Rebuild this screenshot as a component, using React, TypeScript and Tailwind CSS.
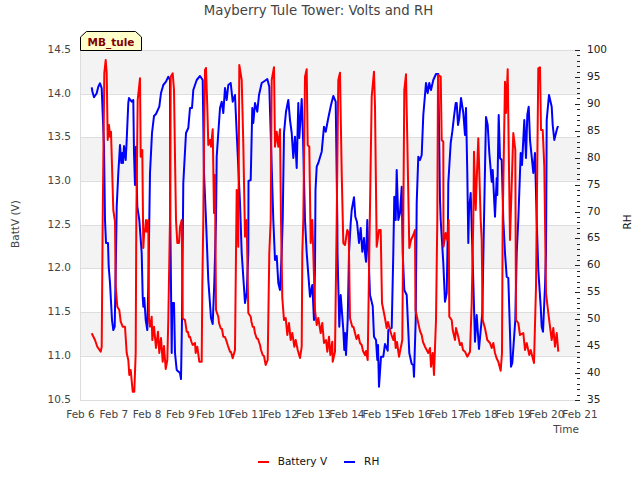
const blue = "91.7,87.3 92.5,92 94,97.3 96.7,93.3 98.3,86.7 100,83.3 101.7,88.3 104,146.7 105,220 106,243 108,243 108.7,266.7 110,283 112,320 113.3,330 114.7,326.7 116,253 116.7,206.7 118.3,173 120,145 121.3,163 122.3,153 123,163 124,146 125.7,160 126.7,140 128.3,103 129,98 131.7,101.7 133.3,100 134,153 135,185 136,146.7 137.3,206.7 139.3,220 141.7,253 142.7,296.7 143.3,306.7 144.3,298 145.7,320 147.3,330 148.3,286.7 149.3,220 150,173 152,133 154,116 156,114 159.3,106.7 161,93 163.3,85 166,81.7 168.3,76.7 170,80 170.3,220 171.7,353 172.3,303 174,303 175,353 176.7,370 180,373 181,379 182,320 183.3,183 186,133 188.3,128 190,108 192,108 193.3,90 196.7,80 200,76 202.7,80 204,173 206,220 208.3,280 211,318 212.7,324 214.3,283 216,220 216.7,156.7 220,108 221.7,101.7 223.3,113 225,88 226.7,100 228.3,85 230.7,83 232.7,101.7 235,95 236.7,133 240,203 241.7,253 245,303 246.7,293 248.3,253 248.5,181 250.7,180 252.3,108 253.3,123 255,103 257.3,111.7 259,95 261.7,83 265,80.7 267.3,79 269.3,86.7 272.7,200 273.3,220 275,260 276.7,256 278.3,283 280,290 281.7,253 282.7,220 284,133 286,111.7 288.3,100 290,120 291.7,133 293.3,158 295,136.7 296.7,168 298.3,103 299.3,138 301.7,99 303,136.7 305,220 306.7,253 310,296.7 312.3,285 314,320 315,266 315.5,190 316.7,166.7 318.3,163 321.7,151.7 324,126.7 325.7,131.7 328.3,118 331,105 333.3,96 335.7,101.7 337.3,220 337.5,253 339.3,326.7 340.7,295 343.3,330 344.3,350 345,333 346,355 347.7,320 349,253 350.7,223 351.7,210 354,197.3 355.3,216.7 357,222 359,243 360.7,228 362.3,251.7 364,238 365,253 366,261.7 367.3,220 370,295 372.7,306 374,336.7 376,340 377.3,360 378,345 379,386.7 381,356.7 383.3,356.7 385,344 387.7,350.7 388.3,330 391.7,328 393.3,253 394.3,196.7 395.7,220 396.7,170 398.3,220 400,213 401.7,186.7 402.7,253 404.3,290 406.7,295 409.3,353 411.7,364 413.3,365 414,376.7 415.7,320 416.7,203 418.3,156.7 420,160 421.7,155 423.3,115 426,83 427.7,93 429.3,83 431,90 433.3,80 436,74 438.3,74 440,200 440.7,220 443.3,263 445,301.7 446.7,293 448,220 448.3,183 450.7,143 452.3,131.7 454,116.7 455.7,103 456.7,103 458,125 459.3,118 461,98 463.3,113 465,135 466,108 467.3,173 468.3,243 469,210 470.7,193 472.3,246.7 475,341.7 476.7,315 479,349 482.3,313 484,220 486,117 487.7,125 489.3,153 491.7,181.7 492.7,170 495,216.7 496.7,178 497.3,195 498.7,115 500,158 501.7,160 503.3,220 505,253 506.7,276.7 508.3,278 510,333 511,366.7 512.3,363 515.3,320 516.7,253 518.3,220 520.7,153 522,165 524.3,120 526,158 527.3,115 528.7,106.7 530,140 531.7,156.7 533.3,173 535,153 536.7,220 538.3,270 540.7,306.7 541.7,326.7 543,331.7 545,286.7 546,253 546.7,120 549,95 551.7,106.7 552.7,125 554.3,140 556.7,130 558,126";

const red = "91.7,333.3 95,340 97.3,346.7 100.7,351.7 101.7,346.7 102.7,220 104.3,73 105.7,60 106.7,73 107.7,140 109,125 110,136.7 111,131.7 113.3,210 115,221.7 115.7,286.7 117.3,306.7 119.3,310 120.7,321.7 122.7,326.7 125,326.7 126.7,353 128.3,360 129.3,375 130.7,370 132.7,391.7 134.3,391.7 135.7,353 136.3,220 137.7,100 140,78.3 140.7,156.7 142.3,150 143.3,248 144.3,230 145,231.7 146,220 146.7,231.7 148.3,220 149,320 150,326.7 151.7,316.7 152.3,340 154,326.7 156,348 158,331.7 159.3,353 161,338 162.7,361.7 164,346 165.7,369 167.3,360 168.3,320 170,220 170.7,76.7 172.7,73.3 174,90 175,156.7 176,220 177.3,243 179,243 180,226.7 181.7,220 182.7,318.3 185,320 186.7,331.7 188,332 189,337 190,336.7 191.5,342 192.7,345 195,343 195.7,353 197.3,346.7 199.3,361.7 201.7,361.7 202.3,286.7 203.3,220 204,140 205,70 206,68 207.3,106.7 208.3,145 210,140 211,146.7 212.7,129.3 214,213 215,175 215.3,220 216,310 218.3,316.7 219,323 220.7,328.3 222,329 223.3,336.7 225,337 226.7,341.7 228,346 230,351.7 231,352 232.7,358.3 235,350 236,253 236.7,190 237.7,220 238.3,246.7 239.3,65 241.7,80 243.3,143.3 245,236.7 246.7,220 248.3,313 250.7,316.7 251.5,322 252.7,326.7 254,327 255,333.3 256.7,338.3 258,339 260,345 261,350 262.7,355 264,356 265.7,365 267.7,360 269.3,253 270.7,220 271.7,80 274,67.3 275,146.7 276.7,131.7 278.3,146.7 280,129.3 281,220 282.3,298 284,320 285.7,318 287.3,335 289,323 290.7,340 292.3,333 294.3,346.7 295.7,340 297.7,350 300,358 301.7,346.7 302.3,253 303.3,220 305,76.7 306.7,69.3 307.7,145 309.3,146.7 310.7,243 312.3,220 315,310 316.7,325 318.3,318 320.7,333 322.3,323 324,343 326,340 327.3,351.7 329,336.7 330.3,355 332.3,341.7 332.7,361.7 335,351.7 336.7,220 338.3,80 340,72.7 341.7,173 343.3,243 345,245 347.3,230 348.7,233 350,318.3 352.3,326.7 353.5,327 355,333 356.5,339 358.3,335 360,343 361.7,345 363,351 365,355 366,351 367.7,360 369.3,253 371.7,96.7 374,71.7 375,106.7 376.7,246.7 379,230 380.7,230 382,303 385,318.3 386.7,328 388,322 390,330 391.5,335 393.3,340 394.5,333 395.7,348 397,342 399,356.7 402.3,340 403.3,220 404.3,90 406,74.3 407.3,140 409.3,248 411,240 413.3,235 415,230 415.5,310 418.3,323.3 420,331 421.7,335 423,342 425,346.7 428.3,353 430,348 431,366.7 432.7,353 434,375 436,320 437.3,220 438,75 440.7,76.7 441.7,140 443.3,141.7 443.5,246.7 445.7,233 447.3,240 448.7,220 449.3,316.7 451.7,320 452.7,330 455,340 456,328 458.3,336.7 460,345 461.7,343 463,350 465,351.7 467.3,356.7 470,351.7 471.7,303 473.3,220 474,151.7 475.7,210 476.7,180 478.3,138.3 480.7,220 481.7,240 482.7,320 485,328.3 487.3,340 490,343 491.7,348 493.3,343 495,353 496.5,358 498.3,361.7 500.7,370.7 502,353 502.7,220 505,81.7 506,113 507.7,69.3 508.7,146.7 510,240 513.3,133 515.3,150 516,320 518.3,323 520,335 523.3,333 525,350 526.7,343 529.3,355 530.7,350 534,363 536,286.7 536.7,220 538.3,68.3 540,67.3 541,130 542.7,130 544.3,166.7 546,293 548.3,313 550,326.7 551.7,340 553.3,328 555,346.7 556.7,333 558.3,351.7";

const bandYs = [50, 137, 225, 312];
const gridYs = [50, 94, 137, 181, 225, 268, 312, 356, 400];
const leftLabels = ["14.5", "14.0", "13.5", "13.0", "12.5", "12.0", "11.5", "11.0", "10.5"];
const rhValues = Array.from({ length: 66 }, (_, i) => 35 + i);

export default function App() {
  return (
    <div className="w-[640px] h-[480px] bg-white flex flex-col overflow-hidden font-['DejaVu_Sans',sans-serif]">
      <div className="h-[22px] pr-[3px] flex items-center justify-center text-[13.3px] text-[#444444]">
        Mayberry Tule Tower: Volts and RH
      </div>
      <svg width="640" height="424" viewBox="0 22 640 424" className="block text-[10.5px]">
        {bandYs.map((y) => (
          <rect key={y} x="80.5" y={y} width="499.5" height="43.7" fill="#f3f3f3" />
        ))}
        {gridYs.map((y) => (
          <line key={y} x1="80" x2="580" y1={y + 0.5} y2={y + 0.5} stroke="#dddddd" />
        ))}
        <line x1="80.5" x2="80.5" y1="50" y2="400" stroke="#dddddd" />

        {rhValues.map((v) => {
          const y = Math.round(400 - (v - 35) * (350 / 65)) + 0.5;
          return (
            <line key={v} x1={v % 5 === 0 ? 575 : 577} x2="580" y1={y} y2={y} stroke="#222222" />
          );
        })}

        <polyline points={blue} fill="none" stroke="#0000ff" strokeWidth="2" strokeLinejoin="round" />
        <polyline points={red} fill="none" stroke="#ff0000" strokeWidth="2" strokeLinejoin="round" />

        {leftLabels.map((t, i) => (
          <text key={t} x="71" y={gridYs[i] + 3} textAnchor="end" fill="#444444">{t}</text>
        ))}
        {rhValues.filter((v) => v % 5 === 0).map((v) => (
          <text key={v} x="587" y={400 - (v - 35) * (350 / 65) + 3} fill="#222222">{v}</text>
        ))}
        {Array.from({ length: 16 }, (_, i) => (
          <text key={i} x={80.5 + i * 33.3} y="418" textAnchor="middle" fill="#444444">{`Feb ${6 + i}`}</text>
        ))}

        <text x="566" y="433" textAnchor="middle" fill="#444444">Time</text>
        <text transform="translate(19 224) rotate(-90)" textAnchor="middle" fill="#444444">BattV (V)</text>
        <text transform="translate(631 222) rotate(-90)" textAnchor="middle" fill="#111111">RH</text>

        <polygon points="80.5,50.5 80.5,37 86.5,31.5 135.5,31.5 141.5,37 141.5,50.5" fill="#ffffcc" stroke="#000000" />
        <text x="111" y="46" textAnchor="middle" fill="#800000" fontWeight="700">MB_tule</text>
      </svg>
      <div className="h-[34px] pr-[3px] flex items-start justify-center gap-[17px] pt-[8px] text-[10.5px] text-[#111111]">
        <div className="flex items-center gap-[9px]">
          <span className="w-[11px] h-[2px] bg-[#ff0000]" />
          <span>Battery V</span>
        </div>
        <div className="flex items-center gap-[9px]">
          <span className="w-[11px] h-[2px] bg-[#0000ff]" />
          <span>RH</span>
        </div>
      </div>
    </div>
  );
}
